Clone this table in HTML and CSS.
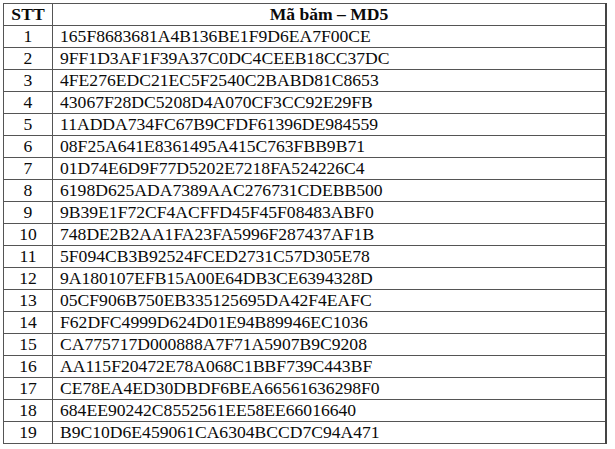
FILE: index.html
```html
<!DOCTYPE html>
<html>
<head>
<meta charset="utf-8">
<link rel="stylesheet" href="styles.css">
</head>
<body>
<table class="hash-table">
  <thead>
    <tr><th class="stt">STT</th><th class="hash">Mã băm – MD5</th></tr>
  </thead>
  <tbody>
    <tr><td class="stt">1</td><td class="hash">165F8683681A4B136BE1F9D6EA7F00CE</td></tr>
    <tr><td class="stt">2</td><td class="hash">9FF1D3AF1F39A37C0DC4CEEB18CC37DC</td></tr>
    <tr><td class="stt">3</td><td class="hash">4FE276EDC21EC5F2540C2BABD81C8653</td></tr>
    <tr><td class="stt">4</td><td class="hash">43067F28DC5208D4A070CF3CC92E29FB</td></tr>
    <tr><td class="stt">5</td><td class="hash">11ADDA734FC67B9CFDF61396DE984559</td></tr>
    <tr><td class="stt">6</td><td class="hash">08F25A641E8361495A415C763FBB9B71</td></tr>
    <tr><td class="stt">7</td><td class="hash">01D74E6D9F77D5202E7218FA524226C4</td></tr>
    <tr><td class="stt">8</td><td class="hash">6198D625ADA7389AAC276731CDEBB500</td></tr>
    <tr><td class="stt">9</td><td class="hash">9B39E1F72CF4ACFFD45F45F08483ABF0</td></tr>
    <tr><td class="stt">10</td><td class="hash">748DE2B2AA1FA23FA5996F287437AF1B</td></tr>
    <tr><td class="stt">11</td><td class="hash">5F094CB3B92524FCED2731C57D305E78</td></tr>
    <tr><td class="stt">12</td><td class="hash">9A180107EFB15A00E64DB3CE6394328D</td></tr>
    <tr><td class="stt">13</td><td class="hash">05CF906B750EB335125695DA42F4EAFC</td></tr>
    <tr><td class="stt">14</td><td class="hash">F62DFC4999D624D01E94B89946EC1036</td></tr>
    <tr><td class="stt">15</td><td class="hash">CA775717D000888A7F71A5907B9C9208</td></tr>
    <tr><td class="stt">16</td><td class="hash">AA115F20472E78A068C1BBF739C443BF</td></tr>
    <tr><td class="stt">17</td><td class="hash">CE78EA4ED30DBDF6BEA66561636298F0</td></tr>
    <tr><td class="stt">18</td><td class="hash">684EE90242C8552561EE58EE66016640</td></tr>
    <tr><td class="stt">19</td><td class="hash">B9C10D6E459061CA6304BCCD7C94A471</td></tr>
  </tbody>
</table>
</body>
</html>
```
FILE: styles.css
```css
html, body {
  margin: 0;
  padding: 0;
  background: #ffffff;
}
body {
  padding: 3px 0 0 3px;
  font-family: "Liberation Serif", "Times New Roman", serif;
  font-size: 17.6px;
  color: #0a0a0a;
}
.hash-table {
  border-collapse: collapse;
  width: 604px;
  table-layout: fixed;
  font-family: "Liberation Serif", "Times New Roman", serif;
}
.hash-table th,
.hash-table td {
  font-family: "Liberation Serif", "Times New Roman", serif;
  border: 1px solid #555555;
  height: 21px;
  padding: 0;
  line-height: 21px;
  vertical-align: middle;
}
.hash-table th {
  font-weight: bold;
  text-align: center;
}
.hash-table .stt {
  width: 48px;
  text-align: center;
}
.hash-table td.hash {
  text-align: left;
  padding-left: 7px;
}
.hash-table th.hash {
  text-align: center;
}
.hash-table tr > *:last-child {
  border-right: 2px solid #444444;
}
```
